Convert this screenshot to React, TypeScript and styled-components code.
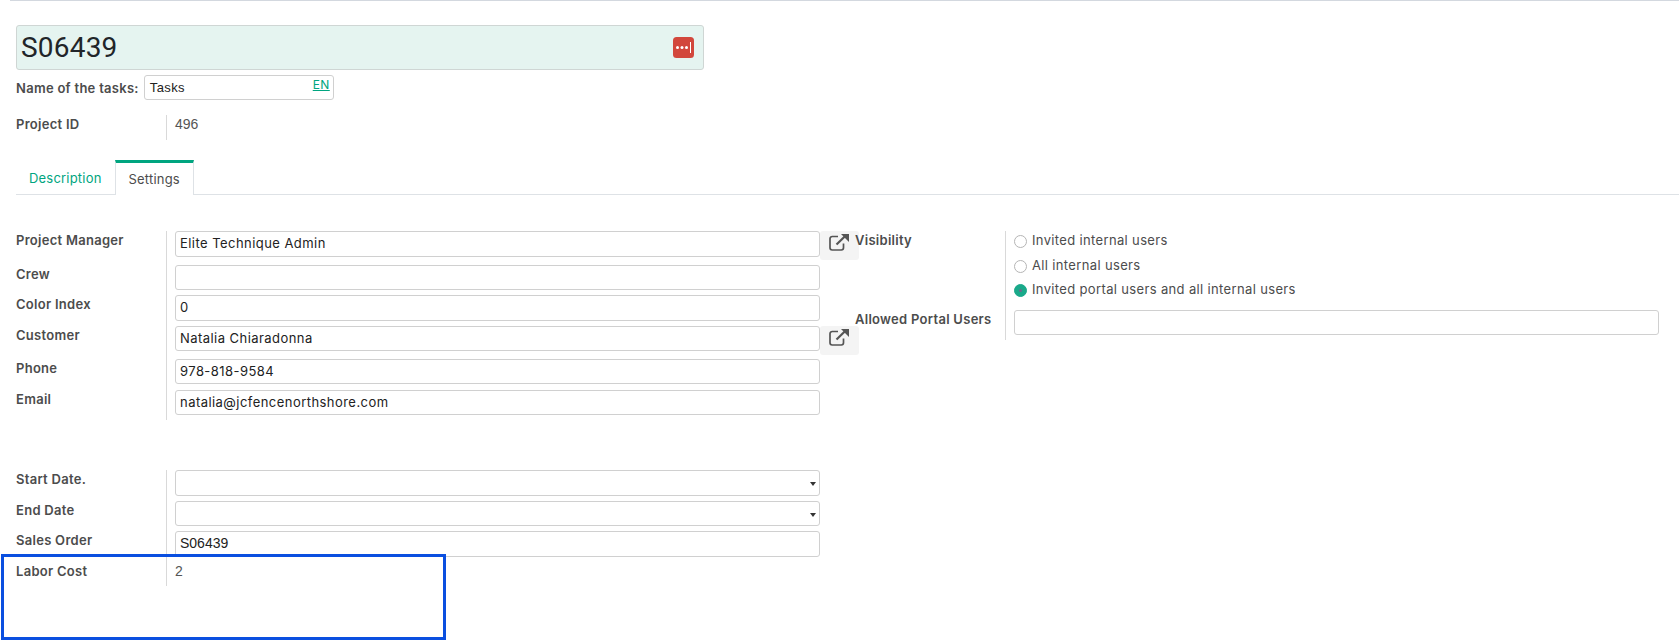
import React from "react";
import styled, { createGlobalStyle } from "styled-components";

const GlobalStyle = createGlobalStyle`
  html, body {
    margin: 0;
    padding: 0;
    background: #fff;
    overflow: hidden;
  }
  body {
    font-family: Inter, "Liberation Sans", sans-serif;
    font-size: 13px;
    color: #4c4c4c;
  }
`;

const Page = styled.div`
  position: relative;
  width: 1679px;
  height: 640px;
  overflow: hidden;
`;

const TopLine = styled.div`
  height: 1px;
  margin-left: 10px;
  background: #d3d8df;
`;

const Sheet = styled.div`
  padding: 24px 0 0 16px;
`;

const TitleBox = styled.div`
  width: 688px;
  height: 45px;
  box-sizing: border-box;
  display: flex;
  align-items: center;
  justify-content: space-between;
  padding: 0 9px 0 4px;
  background: #e5f4f0;
  border: 1px solid #cfd6d4;
  border-radius: 3px;
  font-family: Roboto, "Liberation Sans", sans-serif;
  font-size: 28px;
  letter-spacing: 0.2px;
  color: #212529;
`;

const NameRow = styled.div`
  display: flex;
  align-items: center;
  height: 25px;
  margin-top: 5px;
`;

const StrongLabel = styled.span`
  font-weight: 600;
  color: #4c4c4c;
  letter-spacing: 0.28px;
  white-space: nowrap;
`;

const NameInput = styled.div`
  width: 190px;
  height: 25px;
  box-sizing: border-box;
  margin-left: 5px;
  padding: 0 3px 0 5px;
  display: flex;
  align-items: center;
  justify-content: space-between;
  border: 1px solid #d0d0d0;
  border-radius: 3px;
  font-family: "Liberation Sans", sans-serif;
  letter-spacing: 0.4px;
  color: #222;
`;

const LangLink = styled.span`
  font-family: Inter, sans-serif;
  font-size: 12px;
  font-weight: 400;
  color: #00a580;
  text-decoration: underline;
  margin-bottom: 6px;
`;

const IdRow = styled.div`
  display: flex;
  height: 25px;
  margin-top: 15px;
`;

const LabelCell = styled.div<{ $width: number }>`
  width: ${(p) => p.$width}px;
  flex: none;
  line-height: 18px;
`;

const Divider = styled.div`
  flex: none;
  width: 1px;
  align-self: stretch;
  background: #d9d9d9;
`;

const Value = styled.div`
  padding-left: 8px;
  line-height: 18px;
  font-family: "Liberation Sans", sans-serif;
  font-size: 14px;
  color: #555;
`;

const TabBar = styled.div`
  display: flex;
  height: 34px;
  margin-top: 20px;
  border-bottom: 1px solid #dee2e6;
  box-sizing: content-box;
`;

const Tab = styled.div<{ $active?: boolean }>`
  box-sizing: border-box;
  height: ${(p) => (p.$active ? 35 : 34)}px;
  padding: ${(p) => (p.$active ? "0 13px" : "1px 13px 0")};
  display: flex;
  align-items: center;
  letter-spacing: 0.2px;
  color: ${(p) => (p.$active ? "#4c4c4c" : "#00a580")};
  background: #fff;
  ${(p) =>
    p.$active
      ? `
    border-top: 3px solid #00a580;
    border-left: 1px solid #dee2e6;
    border-right: 1px solid #dee2e6;
  `
      : ""}
`;

const Columns = styled.div`
  display: flex;
  margin-top: 36px;
  align-items: flex-start;
`;

const LeftColumn = styled.div`
  width: 839px;
  flex: none;
`;

const Group = styled.div`
  & + & {
    margin-top: 50px;
  }
`;

const Row = styled.div<{ $height: number }>`
  display: flex;
  height: ${(p) => p.$height}px;
`;

const FieldCell = styled.div`
  display: flex;
  align-items: flex-start;
  padding-left: 8px;
`;

const Input = styled.div<{ $width?: number; $height?: number; $mono?: boolean }>`
  position: relative;
  width: ${(p) => p.$width ?? 645}px;
  height: ${(p) => p.$height ?? 25}px;
  box-sizing: border-box;
  flex: none;
  padding: 0 4px 2px;
  display: flex;
  align-items: center;
  border: 1px solid #d0d0d0;
  border-radius: 3px;
  color: #222;
  font-family: ${(p) => (p.$mono ? '"Liberation Sans", sans-serif' : "Inter, sans-serif")};
  font-size: ${(p) => (p.$mono ? 14 : 13)}px;
  letter-spacing: ${(p) => (p.$mono ? 0 : 0.45)}px;
`;

const Caret = styled.span`
  position: absolute;
  right: 3px;
  top: 11px;
  border-top: 4px solid #333;
  border-left: 3.5px solid transparent;
  border-right: 3.5px solid transparent;
`;

const OpenButton = styled.div`
  flex: none;
  width: 39px;
  height: 29px;
  display: flex;
  align-items: center;
  justify-content: center;
  background: #f4f4f4;
  border-radius: 3px;
  padding: 0 2px 7px 0;
  box-sizing: border-box;
`;

const RightColumn = styled.div`
  width: 660px;
`;

const RadioCell = styled.div`
  display: flex;
  flex-direction: column;
  padding-left: 8px;
`;

const RadioRow = styled.div<{ $height: number }>`
  display: flex;
  align-items: flex-start;
  height: ${(p) => p.$height}px;
  line-height: 18px;
  letter-spacing: 0.35px;
  color: #4c4c4c;
`;

const RadioDot = styled.span<{ $checked?: boolean }>`
  flex: none;
  width: 13px;
  height: 13px;
  box-sizing: border-box;
  margin: 4px 5px 0 0;
  border-radius: 50%;
  border: 1px solid ${(p) => (p.$checked ? "#1aa98a" : "#b5b5b5")};
  background: ${(p) => (p.$checked ? "#1aa98a" : "#fff")};
  display: flex;
  align-items: center;
  justify-content: center;
  &::after {
    content: "";
    display: ${(p) => (p.$checked ? "block" : "none")};
    width: 3px;
    height: 3px;
    border-radius: 50%;
    background: #6f6a8c;
  }
`;

const AllowedLabel = styled(StrongLabel)`
  display: block;
  margin-top: 61px;
`;

const BlueFrame = styled.div`
  position: absolute;
  left: 1px;
  top: 554px;
  width: 445px;
  height: 86px;
  box-sizing: border-box;
  border: 3px solid #0a4fe0;
`;

const MenuIcon = () => (
  <svg width="21" height="21" viewBox="0 0 21 21">
    <rect width="21" height="21" rx="3.5" fill="#d2473c" />
    <circle cx="4.5" cy="10.5" r="1.5" fill="#fff" />
    <circle cx="9" cy="10.5" r="1.5" fill="#fff" />
    <circle cx="13.5" cy="10.5" r="1.5" fill="#fff" />
    <rect x="17" y="5" width="1" height="11" fill="#fff" />
  </svg>
);

const ExternalIcon = () => (
  <svg width="20" height="17" viewBox="0 0 20 17" fill="none">
    <path
      d="M9 2.5H3.2A2.2 2.2 0 0 0 1 4.7v9.1A2.2 2.2 0 0 0 3.2 16h9.1a2.2 2.2 0 0 0 2.2-2.2V9.5"
      stroke="#555"
      strokeWidth="1.7"
    />
    <path d="M7.5 10.5 16 2.2" stroke="#555" strokeWidth="2.2" />
    <path d="M12 0h8v8z" fill="#555" />
  </svg>
);

type Field = { label: string; value?: string; height: number; inputHeight?: number; open?: boolean };

const contactFields: Field[] = [
  { label: "Project Manager", value: "Elite Technique Admin", height: 34, inputHeight: 26, open: true },
  { label: "Crew", height: 30 },
  { label: "Color Index", value: "0", height: 31, inputHeight: 26 },
  { label: "Customer", value: "Natalia Chiaradonna", height: 33, open: true },
  { label: "Phone", value: "978-818-9584", height: 31 },
  { label: "Email", value: "natalia@jcfencenorthshore.com", height: 30 },
];

const App: React.FC = () => {
  return (
    <Page>
      <GlobalStyle />
      <TopLine />
      <Sheet>
        <TitleBox>
          S06439
          <MenuIcon />
        </TitleBox>
        <NameRow>
          <StrongLabel>Name of the tasks:</StrongLabel>
          <NameInput>
            Tasks
            <LangLink>EN</LangLink>
          </NameInput>
        </NameRow>
        <IdRow>
          <LabelCell $width={150}>
            <StrongLabel>Project ID</StrongLabel>
          </LabelCell>
          <Divider />
          <Value>496</Value>
        </IdRow>
        <TabBar>
          <Tab>Description</Tab>
          <Tab $active>Settings</Tab>
        </TabBar>
        <Columns>
          <LeftColumn>
            <Group>
              {contactFields.map((f) => (
                <Row key={f.label} $height={f.height}>
                  <LabelCell $width={150}>
                    <StrongLabel>{f.label}</StrongLabel>
                  </LabelCell>
                  <Divider />
                  <FieldCell>
                    <Input $height={f.inputHeight}>{f.value}</Input>
                    {f.open ? (
                      <OpenButton>
                        <ExternalIcon />
                      </OpenButton>
                    ) : null}
                  </FieldCell>
                </Row>
              ))}
            </Group>
            <Group>
              <Row $height={31}>
                <LabelCell $width={150}>
                  <StrongLabel>Start Date.</StrongLabel>
                </LabelCell>
                <Divider />
                <FieldCell>
                  <Input $height={26}>
                    <Caret />
                  </Input>
                </FieldCell>
              </Row>
              <Row $height={30}>
                <LabelCell $width={150}>
                  <StrongLabel>End Date</StrongLabel>
                </LabelCell>
                <Divider />
                <FieldCell>
                  <Input>
                    <Caret />
                  </Input>
                </FieldCell>
              </Row>
              <Row $height={31}>
                <LabelCell $width={150}>
                  <StrongLabel>Sales Order</StrongLabel>
                </LabelCell>
                <Divider />
                <FieldCell>
                  <Input $height={26} $mono>
                    S06439
                  </Input>
                </FieldCell>
              </Row>
              <Row $height={24}>
                <LabelCell $width={150}>
                  <StrongLabel>Labor Cost</StrongLabel>
                </LabelCell>
                <Divider />
                <Value>2</Value>
              </Row>
            </Group>
          </LeftColumn>
          <RightColumn>
            <Row $height={109}>
              <LabelCell $width={150}>
                <StrongLabel>Visibility</StrongLabel>
                <AllowedLabel>Allowed Portal Users</AllowedLabel>
              </LabelCell>
              <Divider />
              <RadioCell>
                <RadioRow $height={25}>
                  <RadioDot />
                  Invited internal users
                </RadioRow>
                <RadioRow $height={24}>
                  <RadioDot />
                  All internal users
                </RadioRow>
                <RadioRow $height={30}>
                  <RadioDot $checked />
                  Invited portal users and all internal users
                </RadioRow>
                <Input $width={645} />
              </RadioCell>
            </Row>
          </RightColumn>
        </Columns>
      </Sheet>
      <BlueFrame />
    </Page>
  );
};

export default App;
